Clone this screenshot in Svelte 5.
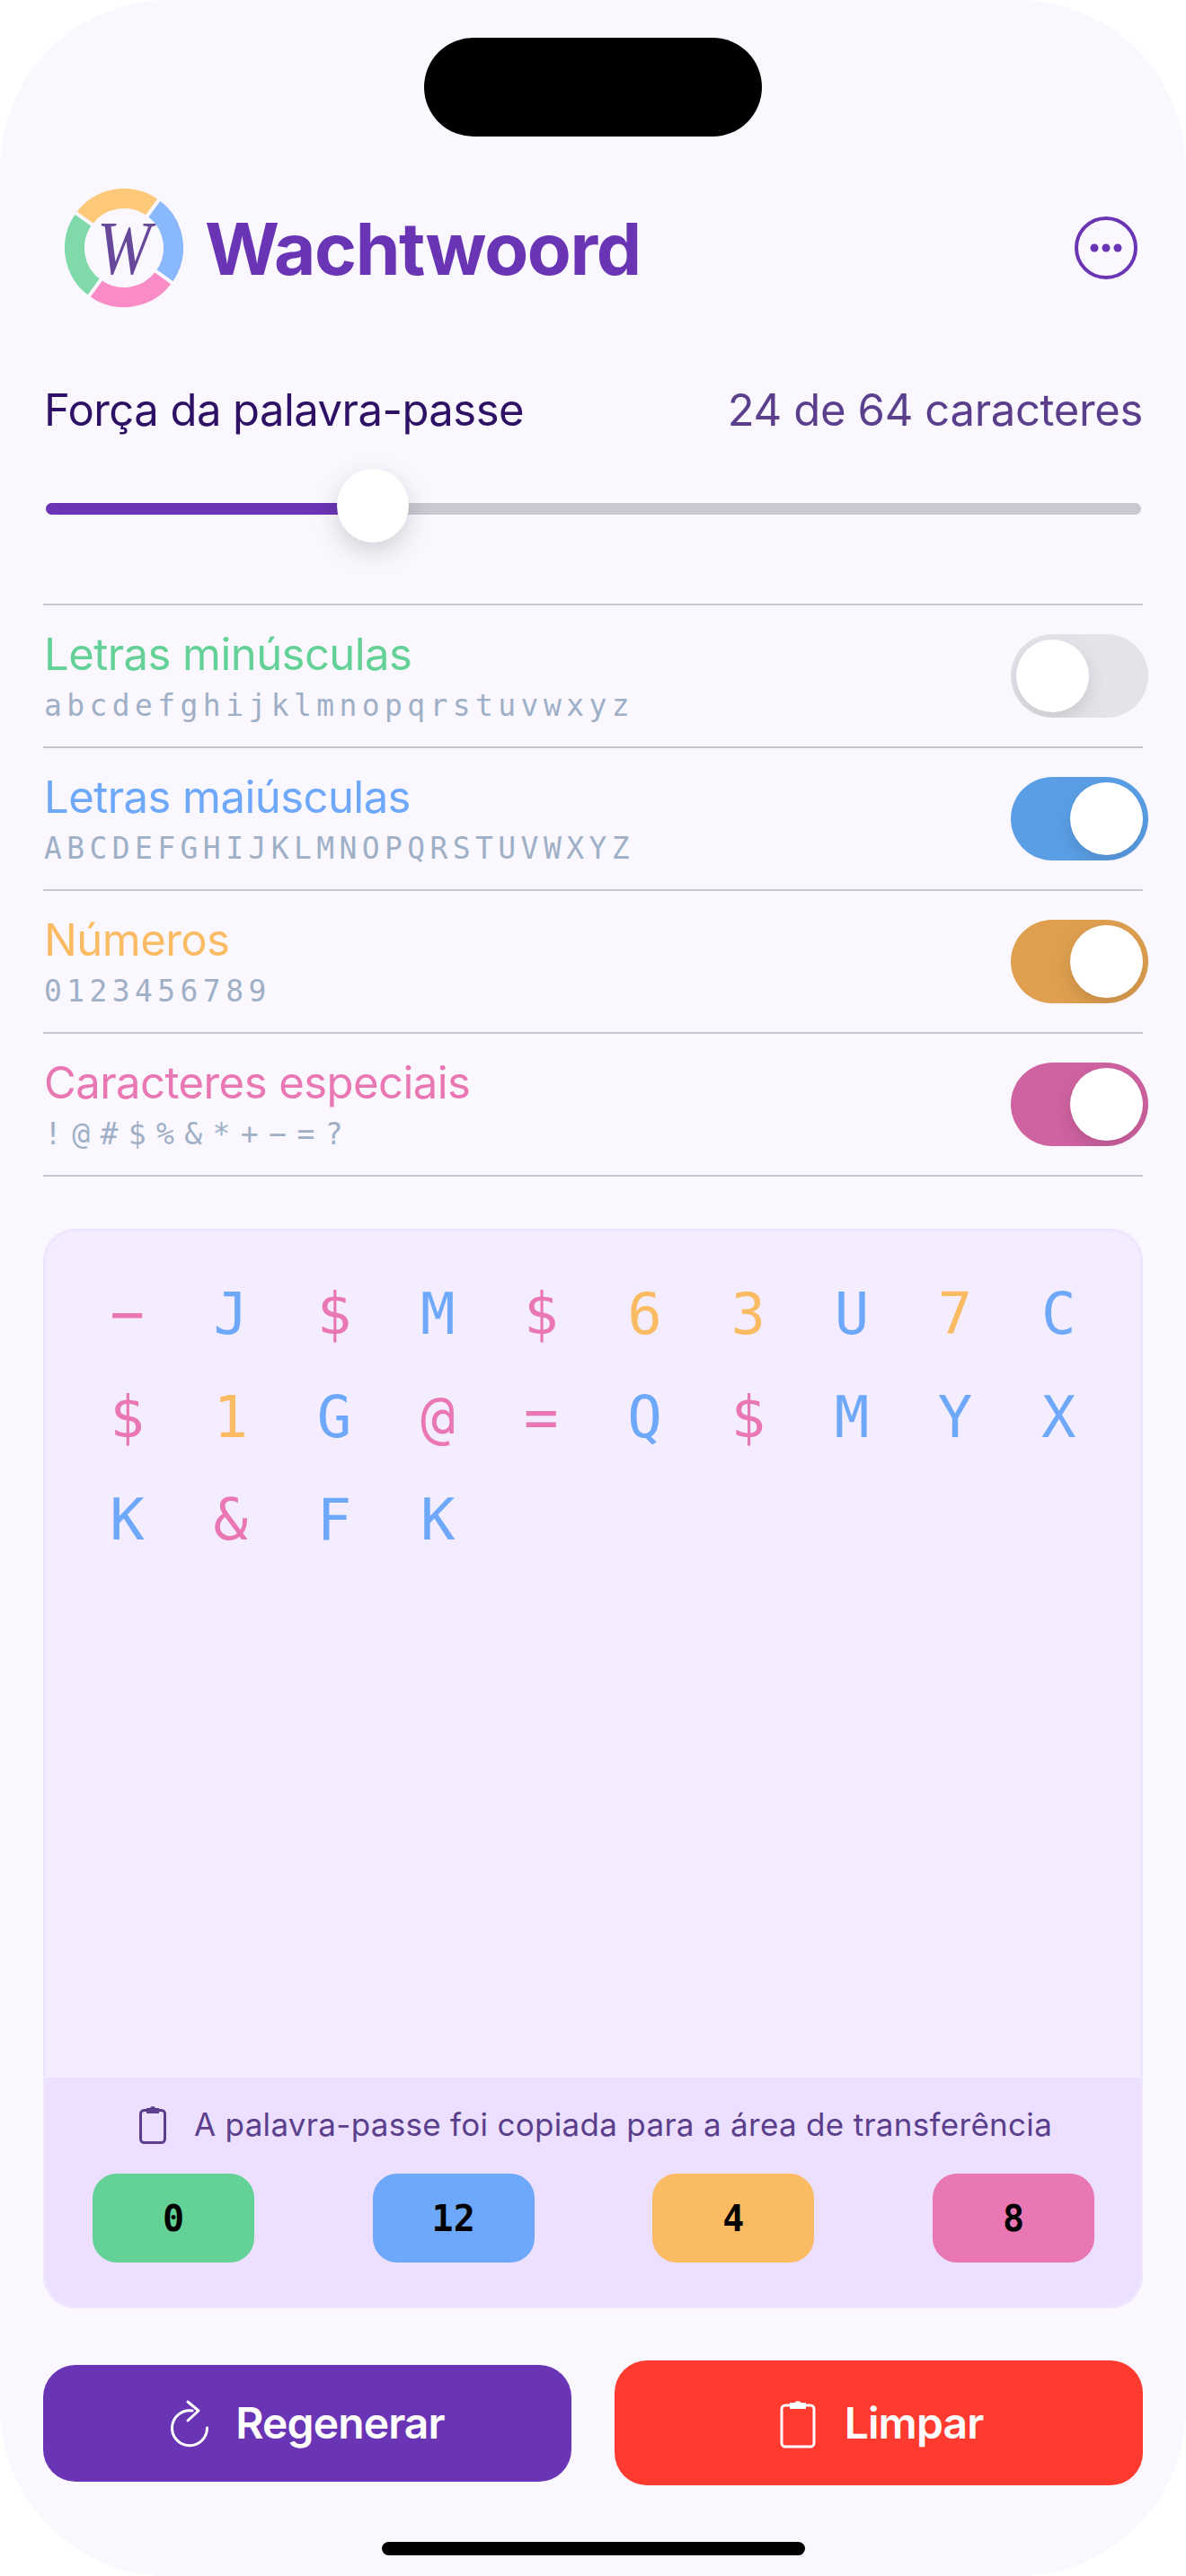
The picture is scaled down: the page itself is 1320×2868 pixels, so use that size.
<script>
const options = [
	{ label: 'Letras minúsculas', sample: 'abcdefghijklmnopqrstuvwxyz', tone: 'green', on: false },
	{ label: 'Letras maiúsculas', sample: 'ABCDEFGHIJKLMNOPQRSTUVWXYZ', tone: 'blue', on: true },
	{ label: 'Números', sample: '0123456789', tone: 'orange', on: true },
	{ label: 'Caracteres especiais', sample: '!@#$%&*+−=?', tone: 'pink', on: true, wide: true }
];

const password = '−J$M$63U7C$1G@=Q$MYXK&FK'.split('');

const toneOf = (ch) => {
	if (/[0-9]/.test(ch)) return 'orange';
	if (/[A-Z]/.test(ch)) return 'blue';
	if (/[a-z]/.test(ch)) return 'green';
	return 'pink';
};

const counts = [
	{ value: 0, tone: 'green' },
	{ value: 12, tone: 'blue' },
	{ value: 4, tone: 'orange' },
	{ value: 8, tone: 'pink' }
];

// logo ring, angles clockwise from 12 o'clock
const ring = [
	{ from: 306, to: 396, color: '#fdc978' },
	{ from: 36, to: 126, color: '#8ab8fd' },
	{ from: 126, to: 216, color: '#f98cc6' },
	{ from: 216, to: 306, color: '#7fd9a9' }
];

const point = (deg, r) => {
	const a = (deg * Math.PI) / 180;
	return `${(66 + r * Math.sin(a)).toFixed(2)} ${(66 - r * Math.cos(a)).toFixed(2)}`;
};
const arc = (s) => `M${point(s.from, 55)} A55 55 0 0 1 ${point(s.to, 55)}`;
</script>

<div class="screen">
	<div class="island"></div>

	<header class="header">
		<div class="brand">
			<svg class="logo" viewBox="0 0 132 132" aria-hidden="true">
				{#each ring as s}
					<path d={arc(s)} fill="none" stroke={s.color} stroke-width="22" />
				{/each}
				{#each ring as s}
					<path d={`M${point(s.from, 40)} L${point(s.from, 70)}`} stroke="#faf7ff" stroke-width="4" />
				{/each}
				<text class="logo-w" x="66" y="95" text-anchor="middle" textLength="60" lengthAdjust="spacingAndGlyphs">W</text>
			</svg>
			<h1>Wachtwoord</h1>
		</div>
		<button class="more" aria-label="Mais opções">
			<svg viewBox="0 0 70 70" width="70" height="70">
				<circle cx="35" cy="35" r="33" fill="none" stroke="#6a35b5" stroke-width="4" />
				<circle cx="22" cy="35" r="4.5" fill="#6a35b5" />
				<circle cx="35" cy="35" r="4.5" fill="#6a35b5" />
				<circle cx="48" cy="35" r="4.5" fill="#6a35b5" />
			</svg>
		</button>
	</header>

	<section class="strength">
		<div class="strength-row">
			<span class="strength-title">Força da palavra-passe</span>
			<span class="strength-count">24 de 64 caracteres</span>
		</div>
		<div class="slider">
			<div class="track"><div class="fill"></div></div>
			<div class="thumb"></div>
		</div>
	</section>

	<ul class="options">
		{#each options as opt}
			<li class="option">
				<div class="option-text">
					<span class="option-label {opt.tone}">{opt.label}</span>
					<span class="option-sample" class:wide={opt.wide}>{opt.sample}</span>
				</div>
				<div class="toggle {opt.tone}" class:on={opt.on}><div class="knob"></div></div>
			</li>
		{/each}
	</ul>

	<section class="card">
		<div class="chars">
			{#each password as ch}
				<span class="char {toneOf(ch)}">{ch}</span>
			{/each}
		</div>
		<div class="card-foot">
			<div class="copied">
				<svg viewBox="0 0 30 44" width="30" height="44" fill="none" stroke="#5b3f8c" stroke-width="3">
					<path d="M8 6.5H5.5a4 4 0 0 0-4 4v28a4 4 0 0 0 4 4h19a4 4 0 0 0 4-4v-28a4 4 0 0 0-4-4H22" />
					<path d="M9 9V5h3.5a2.6 2.6 0 0 1 5 0H21v4z" fill="#5b3f8c" stroke-width="2" />
				</svg>
				<span>A palavra-passe foi copiada para a área de transferência</span>
			</div>
			<div class="counts">
				{#each counts as c}
					<span class="count bg-{c.tone}">{c.value}</span>
				{/each}
			</div>
		</div>
	</section>

	<div class="actions">
		<button class="action regen">
			<svg viewBox="0 0 44 54" width="44" height="54" fill="none" stroke="#fff" stroke-width="3" stroke-linecap="round" stroke-linejoin="round">
				<path d="M25 13A19.5 19.5 0 1 0 41.5 32" />
				<path d="M20 3l12 10-12 11" />
			</svg>
			<span>Regenerar</span>
		</button>
		<button class="action clear">
			<svg viewBox="0 0 40 56" width="40" height="56" fill="none" stroke="#fff" stroke-width="3">
				<path d="M11 8H6a4 4 0 0 0-4 4v38a4 4 0 0 0 4 4h28a4 4 0 0 0 4-4V12a4 4 0 0 0-4-4h-5" />
				<path d="M12 11V6h5a3.4 3.4 0 0 1 6 0h5v5z" fill="#fff" stroke-width="2" />
			</svg>
			<span>Limpar</span>
		</button>
	</div>

	<div class="home"></div>
</div>

<style>
	:global(body) {
		background: #fff;
	}

	.screen {
		position: relative;
		box-sizing: border-box;
		width: 1320px;
		height: 2868px;
		padding: 210px 48px 0;
		overflow: hidden;
		background: #faf7ff;
		border-radius: 188px;
		font-family: Inter, "Liberation Sans", sans-serif;
	}

	.island {
		position: absolute;
		left: 472px;
		top: 42px;
		width: 376px;
		height: 110px;
		background: #000;
		border-radius: 55px;
	}

	.header {
		display: flex;
		align-items: center;
		justify-content: space-between;
		height: 132px;
		padding: 0 6px 0 24px;
	}

	.brand {
		display: flex;
		align-items: center;
		gap: 24px;
	}

	.logo {
		width: 132px;
		height: 132px;
	}

	.logo-w {
		font-family: "Liberation Serif", serif;
		font-style: italic;
		font-size: 84px;
		fill: #67489b;
	}

	h1 {
		margin: 0;
		font-size: 80px;
		font-weight: 700;
		letter-spacing: -1.4px;
		color: #6a35b5;
	}

	.more {
		display: flex;
		padding: 0;
		border: 0;
		background: none;
	}

	.strength {
		margin-top: 86px;
	}

	.strength-row {
		display: flex;
		justify-content: space-between;
		padding: 0 0 0 1px;
		font-size: 49px;
		line-height: 58px;
		letter-spacing: -0.55px;
	}

	.strength-title {
		color: #2e1065;
	}

	.strength-count {
		letter-spacing: -0.35px;
		color: #5b3f8c;
	}

	.slider {
		position: relative;
		height: 82px;
		margin: 36px 2px 0 3px;
		display: flex;
		align-items: center;
	}

	.track {
		width: 100%;
		height: 13px;
		margin-top: 7px;
		border-radius: 7px;
		background: #c9c7d0;
		overflow: hidden;
	}

	.fill {
		width: 30%;
		height: 100%;
		background: #6a35b5;
	}

	.thumb {
		position: absolute;
		left: 324px;
		top: 0;
		width: 80px;
		height: 82px;
		border-radius: 50%;
		background: #fff;
		box-shadow: 0 10px 28px rgba(0, 0, 0, 0.16);
	}

	.options {
		list-style: none;
		margin: 68px 0 0;
		padding: 0;
		border-top: 2px solid #c9c6d0;
	}

	.option {
		box-sizing: border-box;
		display: flex;
		align-items: center;
		justify-content: space-between;
		height: 159px;
		border-bottom: 2px solid #c9c6d0;
	}

	.option-text {
		display: flex;
		flex-direction: column;
		padding: 2px 0 0 1px;
	}

	.option-label {
		font-size: 49px;
		line-height: 58px;
		letter-spacing: -0.55px;
	}

	.option-sample {
		margin-top: 7px;
		font-family: "DejaVu Sans Mono", monospace;
		font-size: 33px;
		line-height: 42px;
		letter-spacing: 5.4px;
		color: #9fb0c6;
	}

	.option-sample.wide {
		letter-spacing: 11.4px;
	}

	.green { color: #64d197; }
	.blue { color: #6ea8fb; }
	.orange { color: #fbbb63; }
	.pink { color: #e977b3; }

	.toggle {
		position: relative;
		flex: none;
		width: 153px;
		height: 93px;
		margin-right: -6px;
		border-radius: 47px;
		background: #e3e3ea;
		overflow: hidden;
	}

	.toggle.blue { background: #5a9fe6; }
	.toggle.orange { background: #df9f4f; }
	.toggle.pink { background: #cf62a0; }

	.knob {
		position: absolute;
		left: 6px;
		top: 6px;
		width: 81px;
		height: 81px;
		border-radius: 50%;
		background: #fff;
		box-shadow: 0 8px 20px rgba(0, 0, 0, 0.12);
	}

	.toggle.on .knob {
		left: 66px;
	}

	.card {
		box-sizing: border-box;
		display: flex;
		flex-direction: column;
		height: 1202px;
		margin-top: 58px;
		border: 3px solid #eee6ff;
		border-radius: 36px;
		background: #f4ecff;
		overflow: hidden;
	}

	.chars {
		flex: 1;
		display: grid;
		grid-template-columns: repeat(10, 115.2px);
		grid-auto-rows: 114.6px;
		align-content: start;
		padding: 35px 0 0 33px;
	}

	.char {
		display: flex;
		align-items: center;
		justify-content: center;
		font-family: "DejaVu Sans Mono", monospace;
		font-size: 64px;
	}

	.card-foot {
		height: 254px;
		background: #ecdfff;
	}

	.copied {
		display: flex;
		align-items: center;
		gap: 31px;
		padding: 30px 0 0 104px;
		font-size: 35px;
		line-height: 44px;
		letter-spacing: 0.3px;
		color: #5b3f8c;
	}

	.counts {
		display: flex;
		justify-content: space-between;
		margin-top: 33px;
		padding: 0 51px 0 52px;
	}

	.count {
		display: flex;
		align-items: center;
		justify-content: center;
		width: 180px;
		height: 99px;
		border-radius: 27px;
		font-family: "DejaVu Sans Mono", monospace;
		font-size: 40px;
		font-weight: 700;
		color: #000;
	}

	.bg-green { background: #64d197; }
	.bg-blue { background: #6ea8fb; }
	.bg-orange { background: #fbbb63; }
	.bg-pink { background: #e977b3; }

	.actions {
		display: flex;
		align-items: center;
		gap: 48px;
		margin-top: 58px;
		height: 139px;
	}

	.action {
		flex: none;
		box-sizing: border-box;
		width: 588px;
		display: flex;
		align-items: center;
		justify-content: center;
		gap: 29px;
		padding: 0;
		border: 0;
		border-radius: 36px;
		font-family: inherit;
		font-size: 48px;
		font-weight: 600;
		letter-spacing: -0.9px;
		color: #fff;
	}

	.regen {
		height: 130px;
		background: #6a35b5;
	}

	.clear {
		height: 139px;
		gap: 32px;
		padding-left: 6px;
		background: #ff3b30;
	}

	.home {
		position: absolute;
		left: 425px;
		top: 2830px;
		width: 471px;
		height: 15px;
		border-radius: 8px;
		background: #000;
	}
</style>
